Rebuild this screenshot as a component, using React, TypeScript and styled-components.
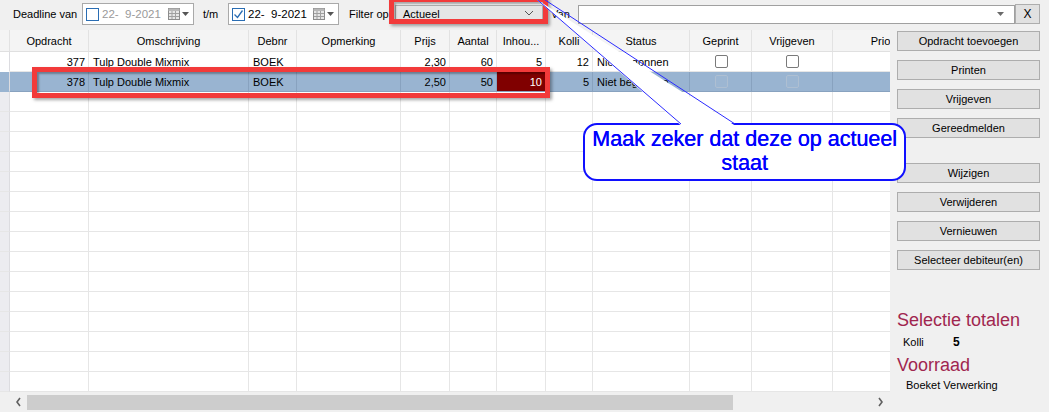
import React from 'react';
import styled, { createGlobalStyle } from 'styled-components';

const GlobalStyle = createGlobalStyle`
  html, body {
    margin: 0;
    padding: 0;
  }
  body {
    width: 1049px;
    height: 412px;
    overflow: hidden;
    background: #f0f0f0;
    font-family: "Liberation Sans", Arial, sans-serif;
    font-size: 11px;
    color: #000;
  }
  * { box-sizing: border-box; }
`;

const Screen = styled.div`
  position: relative;
  width: 1049px;
  height: 412px;
  overflow: hidden;
`;

const Toolbar = styled.div`
  height: 28px;
  display: flex;
  align-items: center;
  padding-left: 13px;
`;

const Label = styled.span<{ $w: number; $ml?: number }>`
  width: ${p => p.$w}px;
  margin-left: ${p => p.$ml || 0}px;
  white-space: nowrap;
`;

const DateBox = styled.div<{ $w: number }>`
  width: ${p => p.$w}px;
  height: 22px;
  display: flex;
  align-items: center;
  background: #fff;
  border: 1px solid #a9a9a9;
  padding-left: 3px;
`;

const Check = styled.span`
  width: 13px;
  height: 13px;
  border: 1px solid #2a6db3;
  background: #fff;
  display: flex;
  align-items: center;
  justify-content: center;
  flex: none;
`;

const DateText = styled.span<{ $dim?: boolean }>`
  margin-left: 3px;
  flex: 1;
  font-size: 11.5px;
  color: ${p => (p.$dim ? '#9a9a9a' : '#000')};
  white-space: pre;
`;

const PickerIcons = styled.span`
  display: flex;
  align-items: center;
  gap: 2px;
  padding-right: 4px;
`;

const Combo = styled.div`
  width: 148px;
  height: 19px;
  display: flex;
  align-items: center;
  justify-content: space-between;
  background: #e5e5e5;
  border: 1px solid #adadad;
  padding: 0 8px 0 7px;
`;

const TextInput = styled.div`
  width: 437px;
  height: 19px;
  display: flex;
  align-items: center;
  justify-content: flex-end;
  background: #fff;
  border: 1px solid #a0a0a0;
  padding-right: 10px;
`;

const ClearButton = styled.div`
  width: 25px;
  height: 20px;
  display: flex;
  align-items: center;
  justify-content: center;
  background: #e1e1e1;
  border: 1px solid #adadad;
  font-size: 12px;
`;

const Main = styled.div`
  display: flex;
  height: 384px;
`;

const GridPane = styled.div`
  width: 890px;
  display: flex;
  flex-direction: column;
  padding-top: 2px;
`;

const Grid = styled.div`
  height: 362px;
  overflow: hidden;
  background: #fff;
`;

const cols = [10, 79, 160, 48, 104, 49, 47, 49, 47, 97, 62, 81, 96];
const template = cols.map(w => `${w}px`).join(' ');

const HeaderRow = styled.div`
  display: grid;
  grid-template-columns: ${template};
  height: 22px;
  background: #f4f4f4;
  border-bottom: 1px solid #e0e0e0;
`;

const HeadCell = styled.div`
  display: flex;
  align-items: center;
  justify-content: center;
  border-right: 1px solid #e2e2e2;
  white-space: nowrap;
  overflow: visible;
`;

const Row = styled.div<{ $selected?: boolean }>`
  display: grid;
  grid-template-columns: ${template};
  height: 20px;
  background: ${p => (p.$selected ? '#99b4d1' : '#fff')};
`;

const Cell = styled.div<{ $align?: 'left' | 'right' | 'center'; $bg?: string; $sel?: boolean; $color?: string }>`
  display: flex;
  align-items: center;
  justify-content: ${p => (p.$align === 'right' ? 'flex-end' : p.$align === 'center' ? 'center' : 'flex-start')};
  padding: 0 3px 0 4px;
  border-right: 1px solid ${p => (p.$sel ? '#88a2bf' : '#e6e6e6')};
  border-bottom: 1px solid ${p => (p.$sel ? '#88a2bf' : '#e6e6e6')};
  background: ${p => p.$bg || 'transparent'};
  color: ${p => p.$color || '#000'};
  white-space: nowrap;
  overflow: hidden;
`;

const RowHead = styled.div<{ $fill?: string }>`
  background: ${p => p.$fill || '#ececf0'};
  border-right: 1px solid #dcdce0;
  border-bottom: 1px solid ${p => (p.$fill ? 'transparent' : '#e6e6e6')};
`;

const Box = styled.span<{ $disabled?: boolean }>`
  width: 13px;
  height: 13px;
  border: 1px solid ${p => (p.$disabled ? '#aebfd2' : '#7a7a7a')};
  border-radius: 2px;
  background: ${p => (p.$disabled ? '#9cb6d2' : '#fff')};
`;

const HScroll = styled.div`
  height: 20px;
  display: flex;
  align-items: center;
  padding: 2px 4px 2px 12px;
`;

const ScrollArrow = styled.span`
  width: 12px;
  display: flex;
  justify-content: center;
`;

const Track = styled.div`
  flex: 1;
  height: 15px;
  margin: 0 4px 0 3px;
  display: flex;
`;

const Thumb = styled.div`
  width: 706px;
  height: 15px;
  background: #cdcdcd;
`;

const SidePanel = styled.div`
  flex: 1;
  display: flex;
  flex-direction: column;
  padding: 3px 0 0 7px;
`;

const ActionButton = styled.div<{ $gap?: number }>`
  width: 143px;
  height: 20px;
  margin-top: ${p => p.$gap ?? 9}px;
  display: flex;
  align-items: center;
  justify-content: center;
  background: #e1e1e1;
  border: 1px solid #adadad;
  white-space: nowrap;
`;

const Heading = styled.div<{ $mt: number }>`
  margin-top: ${p => p.$mt}px;
  font-size: 18px;
  line-height: 20px;
  color: #a0264f;
`;

const TotalRow = styled.div<{ $indent: number; $mt: number }>`
  display: flex;
  margin-top: ${p => p.$mt}px;
  padding-left: ${p => p.$indent}px;
  line-height: 14px;
`;

const TotalLabel = styled.span`
  width: 50px;
`;

const TotalValue = styled.span`
  font-weight: bold;
  font-size: 12px;
`;

const RedFrame = styled.div<{ $x: number; $y: number; $w: number; $h: number }>`
  position: absolute;
  left: ${p => p.$x}px;
  top: ${p => p.$y}px;
  width: ${p => p.$w}px;
  height: ${p => p.$h}px;
  border: 5px solid #f23a3a;
  box-shadow: 2px 2px 3px rgba(0, 0, 0, 0.35), inset 2px 2px 2px rgba(0, 0, 0, 0.3);
`;

const Callout = styled.div`
  position: absolute;
  left: 583px;
  top: 123px;
  width: 323px;
  height: 58px;
  border: 2px solid #1010ff;
  border-radius: 14px;
  background: #fff;
  color: #0000ff;
  font-size: 21.5px;
  line-height: 24px;
  text-align: center;
  padding-top: 2px;
  text-shadow: 0.4px 0 0 #0000ff;
`;

const Tail = styled.svg`
  position: absolute;
  left: 0;
  top: 0;
  pointer-events: none;
`;

const Calendar = () => (
  <svg width="12" height="12" viewBox="0 0 12 12">
    <rect x="0.5" y="0.5" width="11" height="11" fill="#e6e6e6" stroke="#8c8c8c" />
    <rect x="0.5" y="0.5" width="11" height="2.5" fill="#b8b8b8" />
    <path d="M4 3v8M7.5 3v8M1 5.5h10M1 8.5h10" stroke="#a0a0a0" strokeWidth="1" />
  </svg>
);

const DownTri = ({ color = '#555' }: { color?: string }) => (
  <svg width="7" height="4" viewBox="0 0 7 4">
    <path d="M0 0h7L3.5 4z" fill={color} />
  </svg>
);

const Tick = () => (
  <svg width="11" height="11" viewBox="0 0 11 11">
    <path d="M1.5 5.5l3 3 5-7" fill="none" stroke="#2a6db3" strokeWidth="1.3" />
  </svg>
);

const Chevron = ({ dir }: { dir: 'left' | 'right' | 'down' }) => {
  const d = dir === 'left' ? 'M5 1L2 5l3 4' : dir === 'right' ? 'M2 1l3 4-3 4' : 'M1 2l4 4 4-4';
  return (
    <svg width={dir === 'down' ? 10 : 7} height="10" viewBox={dir === 'down' ? '0 0 10 10' : '0 0 7 10'}>
      <path d={d} fill="none" stroke={dir === 'down' ? '#555' : '#606060'} strokeWidth={dir === 'down' ? 1 : 1.6} />
    </svg>
  );
};

type RowData = {
  id: string;
  price: string;
  qty: string;
  content: string;
  kolli: string;
  selected?: boolean;
};

const rows: RowData[] = [
  { id: '377', price: '2,30', qty: '60', content: '5', kolli: '12' },
  { id: '378', price: '2,50', qty: '50', content: '10', kolli: '5', selected: true },
];

const headers = ['Opdracht', 'Omschrijving', 'Debnr', 'Opmerking', 'Prijs', 'Aantal', 'Inhou...', 'Kolli', 'Status', 'Geprint', 'Vrijgeven', 'Prio'];

const DataRow = ({ r }: { r: RowData }) => {
  const s = r.selected;
  return (
    <Row $selected={s}>
      <RowHead $fill={s ? '#99b4d1' : '#fff'} />
      <Cell $align="right" $sel={s}>{r.id}</Cell>
      <Cell $sel={s}>Tulp Double Mixmix</Cell>
      <Cell $sel={s}>BOEK</Cell>
      <Cell $sel={s} />
      <Cell $align="right" $sel={s}>{r.price}</Cell>
      <Cell $align="right" $sel={s}>{r.qty}</Cell>
      <Cell $align="right" $sel={s} $bg={s ? '#800000' : undefined} $color={s ? '#fff' : undefined}>{r.content}</Cell>
      <Cell $align="right" $sel={s}>{r.kolli}</Cell>
      <Cell $sel={s}>Niet begonnen</Cell>
      <Cell $align="center" $sel={s}><Box $disabled={s} /></Cell>
      <Cell $align="center" $sel={s}><Box $disabled={s} /></Cell>
      <Cell $sel={s} />
    </Row>
  );
};

const EmptyRow = () => (
  <Row>
    <RowHead />
    {headers.map(h => (
      <Cell key={h} />
    ))}
  </Row>
);

const buttons: [string, number][] = [
  ['Opdracht toevoegen', 0],
  ['Printen', 9],
  ['Vrijgeven', 9],
  ['Gereedmelden', 9],
  ['Wijzigen', 25],
  ['Verwijderen', 9],
  ['Vernieuwen', 9],
  ['Selecteer debiteur(en)', 9],
];

export default function App() {
  return (
    <Screen>
      <GlobalStyle />
      <Toolbar>
        <Label $w={69}>Deadline van</Label>
        <DateBox $w={112}>
          <Check />
          <DateText $dim>22-  9-2021</DateText>
          <PickerIcons>
            <Calendar />
            <DownTri />
          </PickerIcons>
        </DateBox>
        <Label $w={25} $ml={9}>t/m</Label>
        <DateBox $w={111}>
          <Check>
            <Tick />
          </Check>
          <DateText>22-  9-2021</DateText>
          <PickerIcons>
            <Calendar />
            <DownTri />
          </PickerIcons>
        </DateBox>
        <Label $w={46} $ml={10}>Filter op</Label>
        <Combo>
          <span>Actueel</span>
          <Chevron dir="down" />
        </Combo>
        <Label $w={27} $ml={8}>Van</Label>
        <TextInput>
          <DownTri color="#6a6a6a" />
        </TextInput>
        <ClearButton>X</ClearButton>
      </Toolbar>

      <Main>
        <GridPane>
          <Grid>
            <HeaderRow>
              <HeadCell />
              {headers.map(h => (
                <HeadCell key={h}>{h}</HeadCell>
              ))}
            </HeaderRow>
            {rows.map(r => (
              <DataRow key={r.id} r={r} />
            ))}
            {Array.from({ length: 15 }, (_, i) => (
              <EmptyRow key={i} />
            ))}
          </Grid>
          <HScroll>
            <ScrollArrow><Chevron dir="left" /></ScrollArrow>
            <Track>
              <Thumb />
            </Track>
            <ScrollArrow><Chevron dir="right" /></ScrollArrow>
          </HScroll>
        </GridPane>

        <SidePanel>
          {buttons.map(([label, gap]) => (
            <ActionButton key={label} $gap={gap}>{label}</ActionButton>
          ))}
          <Heading $mt={40}>Selectie totalen</Heading>
          <TotalRow $indent={6} $mt={5}>
            <TotalLabel>Kolli</TotalLabel>
            <TotalValue>5</TotalValue>
          </TotalRow>
          <Heading $mt={6}>Voorraad</Heading>
          <TotalRow $indent={9} $mt={3}>
            <span>Boeket Verwerking</span>
          </TotalRow>
        </SidePanel>
      </Main>

      <RedFrame $x={389} $y={-3} $w={159} $h={27} />
      <RedFrame $x={32} $y={67} $w={518} $h={31} />

      <Callout>
        Maak zeker dat deze op actueel
        <br />
        staat
      </Callout>
      <Tail width="1049" height="412" viewBox="0 0 1049 412">
        <polygon points="536,-1 681,125.5 735,125.5" fill="#fff" />
        <line x1="533" y1="-4" x2="681" y2="124" stroke="#2b2bff" strokeWidth="1" />
        <line x1="539" y1="-4" x2="735" y2="124" stroke="#2b2bff" strokeWidth="1" />
      </Tail>
    </Screen>
  );
}
